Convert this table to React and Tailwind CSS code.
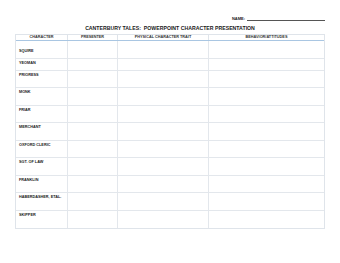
import React from "react";

const rows = [
  ["SQUIRE", 18, "pt-[8px]"],
  ["YEOMAN", 12, "pt-[2px]"],
  ["PRIORESS", 17, "pt-[2px]"],
  ["MONK", 18, "pt-[2px]"],
  ["FRIAR", 17, "pt-[2px]"],
  ["MERCHANT", 18, "pt-[2px]"],
  ["OXFORD CLERIC", 17, "pt-[2px]"],
  ["SGT. OF LAW", 18, "pt-[2px]"],
  ["FRANKLIN", 17, "pt-[2px]"],
  ["HABERDASHER, ETAL.", 18, "pt-[2px]"],
  ["SKIPPER", 17, "pt-[2px]"],
];

export default function App() {
  return (
    <div className="w-[340px] h-[263px] bg-white font-['Liberation_Sans',sans-serif] text-[#1a1a1a]">
      <div className="flex justify-end items-end pt-[15px] pr-[15px] h-[21px]">
        <span className="text-[4px] font-bold leading-[4px] mr-[2px]">NAME:</span>
        <span className="w-[78px] border-b border-[#555]"></span>
      </div>
      <div className="text-center text-[5.2px] font-bold leading-[6px] mt-[4px]">
        CANTERBURY TALES:&nbsp; POWERPOINT CHARACTER PRESENTATION
      </div>
      <div className="ml-[15px] mt-[3px] w-[310px] border border-[#dfe4ea]">
        <div className="grid grid-cols-[52px_50px_91px_115px] h-[6px] border-b border-[#a9c6e2] text-[3.8px] font-bold leading-[5px] text-center text-[#333]">
          <div className="border-r border-[#dfe4ea]">CHARACTER</div>
          <div className="border-r border-[#dfe4ea]">PRESENTER</div>
          <div className="border-r border-[#dfe4ea]">PHYSICAL CHARACTER TRAIT</div>
          <div>BEHAVIOR/ATTITUDES</div>
        </div>
        {rows.map(([label, h, pt], i) => (
          <div
            key={label}
            style={{ height: h }}
            className={`grid grid-cols-[52px_50px_91px_115px] ${i < rows.length - 1 ? "border-b border-[#e3e7ec]" : ""}`}
          >
            <div className={`border-r border-[#e3e7ec] pl-[3px] ${pt} text-[3.8px] font-bold leading-[4px]`}>{label}</div>
            <div className="border-r border-[#e3e7ec]"></div>
            <div className="border-r border-[#e3e7ec]"></div>
            <div></div>
          </div>
        ))}
      </div>
    </div>
  );
}
